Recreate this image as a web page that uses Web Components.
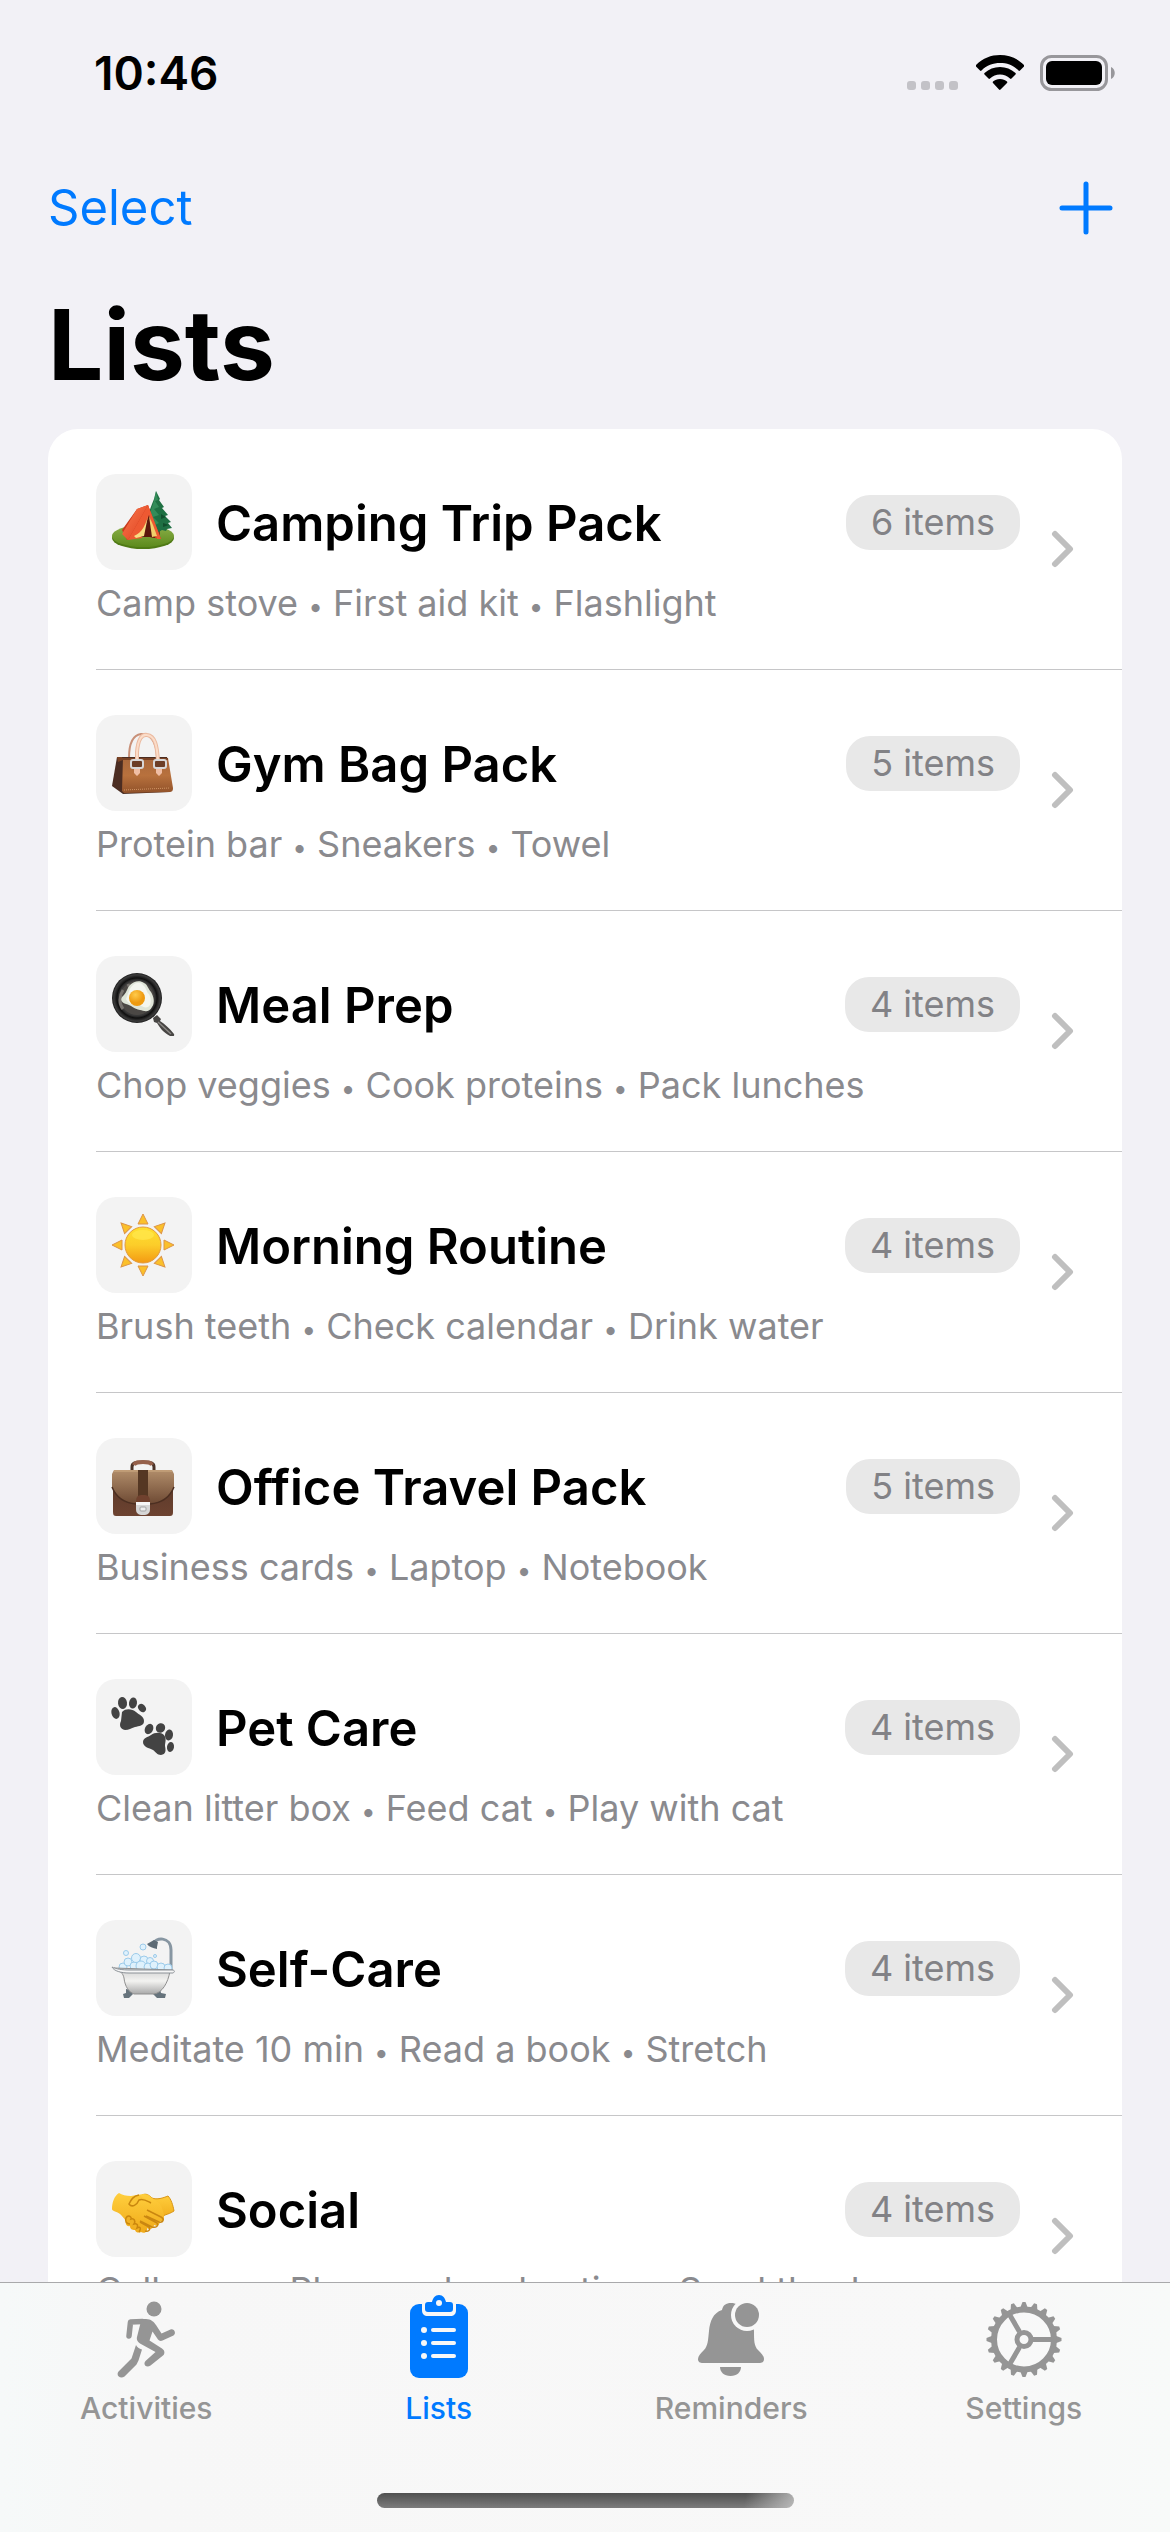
<!DOCTYPE html>
<html lang="en">
<head>
<meta charset="utf-8">
<meta name="viewport" content="width=device-width, initial-scale=1">
<title>Lists</title>
<style>
  html, body { margin: 0; height: 100%; }
  body { background: #f2f1f6; font-family: Inter, "Liberation Sans", sans-serif; color: #000; overflow: hidden; }
</style>
</head>
<body>
<lists-app></lists-app>
<script>
const define = (name, html, setup) => {
  const template = document.createElement('template');
  template.innerHTML = html;
  customElements.define(name, class extends HTMLElement {
    constructor() {
      super();
      this.attachShadow({ mode: 'open' }).append(template.content.cloneNode(true));
    }
    connectedCallback() { if (setup) setup(this, this.shadowRoot); }
  });
};

/* ---------- pictures ---------- */
const emoji = {
  camping: `
    <defs>
      <linearGradient id="g" x1="0" y1="0" x2="0" y2="1"><stop offset="0" stop-color="#8cb04a"/><stop offset="1" stop-color="#5c8a1c"/></linearGradient>
      <linearGradient id="t" x1="0" y1="0" x2="1" y2="1"><stop offset="0" stop-color="#fb7a4e"/><stop offset="1" stop-color="#dd3f1e"/></linearGradient>
    </defs>
    <ellipse cx="32" cy="48" rx="31" ry="11" fill="#4f7a15"/>
    <ellipse cx="32" cy="46" rx="31" ry="11" fill="url(#g)"/>
    <path d="M45 40h4v6h-4z" fill="#6b4428"/>
    <path d="M45 1l4 8-1 1 5 7-2 1 6 7-3 1 6 6-3 1 4 5-5 1-1 2-4-1-5 3-9-2-4-5 2-6 3-8 3-8 2-5z" fill="#1f7043"/>
    <path d="M45 1l2 9-3 1 4 6-5 2 5 6-6 2 6 6-6 3-5-6 3-10 3-9z" fill="#3c9962" opacity=".7"/>
    <path d="M50 24l5 3-5 2zM52 33l6 2-6 2z" fill="#124f2d"/>
    <path d="M26 19l11-4 13 34-17-3-17 4-5-10z" fill="#c93a1d"/>
    <path d="M26 19l11-4L17 50 11 44z" fill="url(#t)"/>
    <path d="M37 15l13 34h-4L38 27l-7 21-14 2z" fill="#ed5932"/>
    <path d="M38 25l-8 22h9l5 1z" fill="#5b170d"/>
    <path d="M37 26l-4 20-8 2-2-2c8-3 12-12 14-20z" fill="#f8dd82"/>
    <path d="M38 26l3 21 5-1-4-11z" fill="#f0cf6b"/>`,
  handbag: `
    <defs><linearGradient id="g" x1="0" y1="0" x2="0" y2="1"><stop offset="0" stop-color="#a9683c"/><stop offset=".5" stop-color="#b8713d"/><stop offset="1" stop-color="#91522a"/></linearGradient></defs>
    <path d="M18 27c0-15 4-23 12-24 8-1 16 7 16 24" fill="none" stroke="#c89078" stroke-width="2"/>
    <path d="M6 26l50 0 5 31-2 4-47 2L1 55z" fill="#4b2d22"/>
    <path d="M12 27h45l5 30c0 3-1 4-4 4l-45 1-2-2z" fill="url(#g)"/>
    <path d="M6 26l5 0 1 3-5 2zM11 27h46v2H11z" fill="#7b4325"/>
    <path d="M13 59l46-2" stroke="#d19564" stroke-width="1" stroke-dasharray="1 1"/>
    <path d="M26 31V21C27 8 31 3 36 4c8 1 10 10 11 26" fill="none" stroke="#eab99f" stroke-width="4"/>
    <path d="M26 31V21C27 8 31 3 36 4c8 1 10 10 11 26" fill="none" stroke="#fbdcc8" stroke-width="2"/>
    <path d="M23 38h6v4l-3 3-3-3zM45 38h6v4l-3 3-3-3z" fill="#f0bea4"/>
    <rect x="20" y="29" width="12" height="8" rx="2" fill="#6c3e26" stroke="#d8d8d8" stroke-width="2"/>
    <rect x="43" y="29" width="12" height="8" rx="2" fill="#6c3e26" stroke="#d8d8d8" stroke-width="2"/>`,
  cooking: `
    <defs>
      <radialGradient id="g"><stop offset="0" stop-color="#555250"/><stop offset=".72" stop-color="#363636"/><stop offset=".8" stop-color="#0f0f0f"/><stop offset=".93" stop-color="#3c3c3c"/><stop offset="1" stop-color="#171717"/></radialGradient>
      <radialGradient id="y" cx=".4" cy=".3"><stop offset="0" stop-color="#ffcb4b"/><stop offset="1" stop-color="#ee9a10"/></radialGradient>
    </defs>
    <path d="M42 46l4-3 4 4-1 2c5 3 9 7 14 13 1 2-2 4-4 2-7-4-10-8-13-13l-3-1z" fill="#474543"/>
    <path d="M47 50l13 12" stroke="#8b8885" stroke-width="1.500"/>
    <circle cx="26" cy="26" r="25" fill="url(#g)"/>
    <circle cx="26" cy="26" r="17" fill="#4b4845"/>
    <path d="M12 18c-4 6-4 14 0 19M17 12l10 22" stroke="#77736f" stroke-width="3" fill="none"/>
    <path d="M19 13c4-4 10-5 14-2 4 2 4 6 7 9 3 5 4 11 1 15-3 6-8 4-12 3-6-1-9-5-14-6-6-2-6-6-2-9 3-3 3-7 6-10z" fill="#dfe5d8"/>
    <path d="M21 14c4-4 8-4 11-1 4 3 3 7 6 9 3 5 2 12-1 13-5 2-7-3-12-2-5 0-9-3-10-6 2-4 3-10 6-13z" fill="#f4f6ef"/>
    <circle cx="26" cy="26" r="8" fill="url(#y)"/>`,
  sun: `
    <defs><linearGradient id="g" x1="0" y1="0" x2="0" y2="1"><stop offset="0" stop-color="#ffe02f"/><stop offset=".5" stop-color="#fccd2a"/><stop offset="1" stop-color="#f39a12"/></linearGradient></defs>
    <g fill="#fbc02a" stroke="#dc9447" stroke-width="1">${Array.from({ length: 8 }, (_, i) => `<path d="M32 1l5 10h-10z" transform="rotate(${i * 45} 32 32)"/>`).join('')}</g>
    <circle cx="32" cy="32" r="18" fill="url(#g)" stroke="#e39a3d" stroke-width="1"/>
    <ellipse cx="32" cy="22" rx="11" ry="5" fill="#ffe84e" opacity=".7"/>`,
  briefcase: `
    <defs>
      <linearGradient id="g" x1="0" y1="0" x2="0" y2="1"><stop offset="0" stop-color="#b18d6a"/><stop offset="1" stop-color="#6e4a34"/></linearGradient>
      <linearGradient id="b" x1="0" y1="0" x2="0" y2="1"><stop offset="0" stop-color="#5c3a2a"/><stop offset="1" stop-color="#6c4230"/></linearGradient>
    </defs>
    <path d="M21 17V13c0-4 3-5 11-5s11 1 11 5v4" fill="none" stroke="#4a3328" stroke-width="3"/>
    <path d="M23 11c1-3 4-3 9-3s8 0 9 3" fill="none" stroke="#95604a" stroke-width="4"/>
    <path d="M2 28h60v30c0 3-1 4-3 4H5c-2 0-3-1-3-4z" fill="url(#b)"/>
    <path d="M3 16h58l2 4v13c-4 10-12 16-24 17H25C13 49 5 43 1 33V20z" fill="url(#g)"/>
    <path d="M1 33c4 10 12 16 24 17h14c12-1 20-7 24-17" fill="none" stroke="#4c2f21" stroke-width="1.500"/>
    <path d="M3 17h58" stroke="#d0ad84" stroke-width="1"/>
    <path d="M27 16h10v29H27z" fill="#553723"/>
    <path d="M25 48c0-6 2-7 7-7s7 1 7 7z" fill="#70412e"/>
    <path d="M25 48h14v7c0 4-2 6-7 6s-7-2-7-6z" fill="#d6d6d6"/>
    <path d="M25 48h14v3H25z" fill="#f6f6f6"/>
    <rect x="29" y="53" width="6" height="4" rx="1" fill="#eee" stroke="#a2a2a2"/>`,
  paws: `
    <g fill="#434343">
      <path d="M11 17c4-4 10-3 14 0 3 3 8 4 8 9s-5 5-9 6-6 3-10 3c-5-1-6-5-4-9z"/>
      <ellipse cx="4.500" cy="18" rx="4" ry="6" transform="rotate(-14 4.500 18)"/>
      <ellipse cx="11.500" cy="8" rx="4.500" ry="6" transform="rotate(-8 11.500 8)"/>
      <ellipse cx="22" cy="8" rx="4" ry="5.500" transform="rotate(8 22 8)"/>
      <ellipse cx="31" cy="13" rx="3.500" ry="4.500" transform="rotate(-40 31 13)"/>
      <path d="M32 47c0-4 5-5 8-7 4-3 10-3 13 0 3 4 1 7 1 11 1 5 1 8-4 9-4 0-5-3-8-5-4-2-10-3-10-8z"/>
      <ellipse cx="38" cy="34" rx="4" ry="5.500" transform="rotate(28 38 34)"/>
      <ellipse cx="49.500" cy="33" rx="4.500" ry="5" transform="rotate(36 49.500 33)"/>
      <ellipse cx="58" cy="40" rx="4" ry="5.500" transform="rotate(10 58 40)"/>
      <ellipse cx="59.500" cy="52" rx="3.500" ry="5" transform="rotate(8 59.500 52)"/>
    </g>`,
  bath: `
    <defs><linearGradient id="g" x1="0" y1="0" x2="0" y2="1"><stop offset="0" stop-color="#cfcfcf"/><stop offset=".5" stop-color="#f3f3f1"/><stop offset="1" stop-color="#a9a9a9"/></linearGradient></defs>
    <path d="M60 33V14c0-14-16-13-18-6" fill="none" stroke="#8796a2" stroke-width="3"/>
    <path d="M36 8l7-4 4 2-1 5 0 2c-4-1-8-2-10-5z" fill="#5d6b75"/>
    <g fill="#dff1fc" stroke="#9ccbea" stroke-width="1">
      <circle cx="12" cy="31" r="4"/><circle cx="17" cy="26" r="4"/><circle cx="23" cy="30" r="4"/><circle cx="25" cy="22" r="4.500"/>
      <circle cx="33" cy="24" r="4"/><circle cx="30" cy="30" r="5"/><circle cx="39" cy="25" r="3.500"/><circle cx="37" cy="31" r="4"/>
      <circle cx="43" cy="29" r="4"/><circle cx="50" cy="31" r="4"/><circle cx="57" cy="32" r="4"/><circle cx="15" cy="17" r="2.500"/>
      <circle cx="32" cy="11" r="3"/><circle cx="44" cy="20" r="1.500"/>
    </g>
    <path d="M15 53l5 1 2 4-4 4h-5l-1-4 3-1zM49 53l-5 1-2 4 4 4h8l1-4-5-1z" fill="#66737c"/>
    <path d="M3 32c6 3 9 5 10 10 1 9 5 14 10 16h20c8-1 14-11 16-23l3-1z" fill="url(#g)" stroke="#8f8f8f" stroke-width="1"/>
    <path d="M1 31c4 2 10 3 18 3h42c3 0 3 2 1 3H18C10 37 3 35 1 31z" fill="#f6f6f6" stroke="#8c9298" stroke-width="1"/>`,
  handshake: `
    <defs><linearGradient id="g" x1="0" y1="0" x2="0" y2="1"><stop offset="0" stop-color="#ffcf3e"/><stop offset="1" stop-color="#f0aa19"/></linearGradient></defs>
    <g transform="translate(0 5)">
      <path d="M57 14c3 3 5 9 6 15-3 2-6 3-9 4l-9 5-20-18 6-7c4-2 7 0 10 3 5 2 11 0 16-2z" fill="url(#g)" stroke="#d99514" stroke-width="1"/>
      <path d="M8 11c3 2 7 3 12 3l12-2c7 0 9 5 16 9 3 3 5 10 5 14 0 3-2 5-4 4 0 4-3 6-6 4 0 4-5 5-7 3 1 4-3 6-6 4-2 1-5 1-6-2-3 0-5-1-5-4-3 1-5-2-4-5-2-3-4-5-6-7-4-3-8-3-8-5 0-6 2-13 7-16z" fill="url(#g)"/>
      <path d="M19 42c-4 0-5-3-4-6 2-4 6-1 5 1 3-1 5 2 3 5 4-1 4 2 3 4 4-2 4 1 2 4" fill="#f1b224" stroke="#cb870d" stroke-width="1.500"/>
      <path d="M36 28l14 7c4 2 2 6-2 5l-13-6M33 34l13 7c2 3-1 5-5 4l-12-6M29 40l9 5c2 3-1 5-4 4" fill="none" stroke="#ca8711" stroke-width="1.500"/>
      <path d="M28 13c-6 1-8 5-10 9 3 4 8 1 10-4 4-2 8 1 12 3" fill="#fbc534" stroke="#c9870f" stroke-width="1.500"/>
    </g>`
};

define('status-bar', `
  <style>
    :host { display: flex; justify-content: space-between; align-items: center; height: 146px; padding: 0 54px 0 94px; box-sizing: border-box; }
    time { font-size: 46px; font-weight: 600; line-height: 56px; }
    .icons { display: flex; align-items: center; gap: 16px; }
    svg { display: block; }
  </style>
  <time>10:46</time>
  <div class="icons">
    <svg width="53" height="36" viewBox="0 0 53 36"><g fill="#c3c2c7"><rect y="26" width="9" height="9" rx="3"/><rect x="14" y="26" width="9" height="9" rx="3"/><rect x="28" y="26" width="9" height="9" rx="3"/><rect x="42" y="26" width="9" height="9" rx="3"/></g></svg>
    <svg width="48" height="36" viewBox="0 0 48 36">
      <path d="M24 0c9 0 17 3 24 10 .5 .500 .5 1 0 1.500l-4 4c-.5 .500-1 .500-1.500 0C37 10 31 8 24 8S11 10 5.500 15.500c-.5 .500-1 .500-1.500 0l-4-4c-.5-.5-.5-1 0-1.500C7 3 15 0 24 0z"/>
      <path d="M24 12c6 0 11 2 15.500 6 .5 .500 .5 1 0 1.500l-4 4c-.5 .500-1 .500-1.500 0-3-2.500-6-4-10-4s-7 1.500-10 4c-.5 .500-1 .500-1.500 0l-4-4c-.5-.5-.5-1 0-1.500C13 14 18 12 24 12z"/>
      <path d="M24 24c3 0 5 1 7 2.500 .5 .500 .5 1 0 1.500l-6.500 6.500c-.5 .500-1 .500-1.500 0L17 28c-.5-.5-.5-1 0-1.500C19 25 21 24 24 24z"/>
    </svg>
    <svg width="76" height="36" viewBox="0 0 76 36"><rect x="1.500" y="1.500" width="65" height="33" rx="10" fill="none" stroke="#98979b" stroke-width="3"/><rect x="6" y="6" width="56" height="24" rx="6"/><path d="M71 12c5 2 5 10 0 12z" fill="#98979b"/></svg>
  </div>`);

define('nav-bar', `
  <style>
    :host { display: block; padding: 0 48px; }
    .actions { display: flex; justify-content: space-between; align-items: center; height: 124px; }
    button { all: unset; color: #007aff; font-size: 49px; line-height: 60px; cursor: pointer; }
    svg { display: block; margin-right: 9px; }
    h1 { margin: 0; padding: 9px 0 19px; font-size: 98px; line-height: 131px; font-weight: 700; }
  </style>
  <div class="actions">
    <button type="button">Select</button>
    <button type="button" aria-label="Add list"><svg width="54" height="54" viewBox="0 0 54 54"><path d="M27 3v48M3 27h48" stroke="#007aff" stroke-width="5" stroke-linecap="round"/></svg></button>
  </div>
  <h1><slot></slot></h1>`);

define('list-row', `
  <style>
    :host { display: block; padding-left: 48px; }
    a { display: flex; align-items: center; gap: 30px; padding: 45px 48px 45px 0; color: inherit; text-decoration: none; border-bottom: 1px solid #c6c6c8; }
    .body { flex: 1; min-width: 0; }
    .head { display: flex; align-items: center; gap: 24px; }
    .tile { display: flex; flex: none; box-sizing: border-box; width: 96px; height: 96px; padding-right: 3px; border-radius: 20px; background: #f3f3f3; align-items: center; justify-content: center; }
    h2 { flex: 1; margin: 0; padding-top: 3px; font-size: 49px; line-height: 60px; font-weight: 600; white-space: nowrap; }
    .count { padding: 0 25px; border-radius: 24px; background: #e8e8e8; color: #828286; font-size: 36px; line-height: 55px; white-space: nowrap; }
    p { margin: 12px 0 0; font-size: 36px; line-height: 42px; color: #8a8a8e; white-space: nowrap; }
    .dot { font-size: 26px; line-height: 1; }
    svg { display: block; flex: none; }
  </style>
  <a href="#">
    <div class="body">
      <div class="head">
        <span class="tile"></span>
        <h2></h2>
        <span class="count"></span>
      </div>
      <p></p>
    </div>
    <svg width="24" height="38" viewBox="0 0 24 38"><path d="M5 4l15 15L5 34" fill="none" stroke="#bfbfbf" stroke-width="6" stroke-linecap="round" stroke-linejoin="round"/></svg>
  </a>`, (host, root) => {
    root.querySelector('.tile').innerHTML = `<svg width="64" height="64" viewBox="0 0 64 64" aria-hidden="true">${emoji[host.getAttribute('icon')]}</svg>`;
    root.querySelector('h2').textContent = host.getAttribute('name');
    root.querySelector('.count').textContent = host.getAttribute('count') + ' items';
    root.querySelector('p').innerHTML = host.getAttribute('preview').split(', ').join(' <span class="dot">•</span> ');
});

define('list-card', `
  <style>:host { display: block; margin: 0 48px; background: #fff; border-radius: 30px; overflow: hidden; }</style>
  <slot></slot>`);

define('tab-item', `
  <style>
    :host { display: block; flex: 1 1 0; color: #959595; }
    :host([active]) { color: #007aff; }
    a { display: flex; flex-direction: column; align-items: center; color: inherit; text-decoration: none; font-size: 30px; line-height: 36px; font-weight: 500; }
    .icon { height: 107px; }
    ::slotted(svg) { display: block; }
  </style>
  <a href="#"><span class="icon"><slot name="icon"></slot></span><slot></slot></a>`);

define('tab-bar', `
  <style>
    :host { display: block; box-sizing: border-box; height: 250px; border-top: 1px solid #a9a9ab; background: linear-gradient(90deg, #f6f9f9, #f7f7f7 12%, #f8f8f8 85%, #f8faf9); }
    nav { display: flex; height: 210px; }
    .home { width: 417px; height: 15px; margin: 0 auto; border-radius: 8px; background: linear-gradient(100deg, transparent 88%, #c8c8c8cc), linear-gradient(#505050, #7c7c7c); }
  </style>
  <nav><slot></slot></nav>
  <div class="home"></div>`);

const gearTeeth = Array.from({ length: 20 }, (_, i) =>
  `<path d="M70 33.500l4 1.500 2.500 1v3l-2.500 1-4 1.500z" transform="rotate(${i * 18} 39 37.500)"/>`).join('');

define('lists-app', `
  <style>
    :host { display: flex; flex-direction: column; height: 100vh; }
    main { flex: 1; min-height: 0; overflow: hidden; }
  </style>
  <status-bar></status-bar>
  <nav-bar>Lists</nav-bar>
  <main>
    <list-card>
      <list-row icon="camping" name="Camping Trip Pack" count="6" preview="Camp stove, First aid kit, Flashlight"></list-row>
      <list-row icon="handbag" name="Gym Bag Pack" count="5" preview="Protein bar, Sneakers, Towel"></list-row>
      <list-row icon="cooking" name="Meal Prep" count="4" preview="Chop veggies, Cook proteins, Pack lunches"></list-row>
      <list-row icon="sun" name="Morning Routine" count="4" preview="Brush teeth, Check calendar, Drink water"></list-row>
      <list-row icon="briefcase" name="Office Travel Pack" count="5" preview="Business cards, Laptop, Notebook"></list-row>
      <list-row icon="paws" name="Pet Care" count="4" preview="Clean litter box, Feed cat, Play with cat"></list-row>
      <list-row icon="bath" name="Self-Care" count="4" preview="Meditate 10 min, Read a book, Stretch"></list-row>
      <list-row icon="handshake" name="Social" count="4" preview="Call mom, Plan weekend outing, Send thanks"></list-row>
    </list-card>
  </main>
  <tab-bar>
    <tab-item>
      <svg slot="icon" width="60" height="100" viewBox="0 0 60 100" fill="none" stroke="currentColor" stroke-linecap="round" stroke-linejoin="round">
        <circle cx="38" cy="26" r="7.500" fill="currentColor" stroke="none"/>
        <path d="M13 53l1.500-14 12-.5" stroke-width="5.500"/>
        <path d="M22 36h8c5 0 8 3 10 6l5.500 8.500 9-4c4-1 6 4 3 6l-11 5c-2 1-3.500 0-4.500-1l-5.500-8-3 9 12.500 8c3 2 3 5 1 7L34.500 82.500c-4 3-8-1-5-4.500l10-9L24 60.500c-3-2-3.500-4-3-6.500l3.500-14z" fill="currentColor" stroke="none"/>
        <path d="M20 62c1 2 3 3.500 6 4.500l-3.500 11-2 4-12 12c-4 3-9-1-6-5l13-13z" fill="currentColor" stroke="none"/>
      </svg>
      Activities
    </tab-item>
    <tab-item active>
      <svg slot="icon" width="60" height="100" viewBox="0 0 60 100">
        <rect x="1" y="21" width="58" height="74" rx="9" fill="currentColor"/>
        <path d="M13 19v8c0 4 2 6 6 6h22c4 0 6-2 6-6v-8z" fill="#f7f7f7"/>
        <path d="M16 22c0-2 1-3 3-3h4c1-4 3-7 7-7s6 3 7 7h4c2 0 3 1 3 3v4c0 2-1 3-3 3H19c-2 0-3-1-3-3z" fill="currentColor"/>
        <circle cx="30" cy="20" r="3" fill="#f7f7f7"/>
        <g fill="#f7f7f7"><circle cx="15" cy="47" r="3"/><circle cx="15" cy="60" r="3"/><circle cx="15" cy="73" r="3"/><rect x="22" y="45" width="25" height="4" rx="2"/><rect x="22" y="58" width="25" height="4" rx="2"/><rect x="22" y="71" width="25" height="4" rx="2"/></g>
      </svg>
      Lists
    </tab-item>
    <tab-item>
      <svg slot="icon" width="66" height="100" viewBox="0 0 66 100">
        <path d="M33 20c-5 0-8 2-9 7-9 3-12 11-13 21-1 9-1 15-5 19-3 3-6 6-6 9s2 4 5 4h56c3 0 5-1 5-4s-3-6-6-9c-4-4-4-10-4-19-1-10-4-18-13-21-1-5-5-7-10-7z" fill="currentColor"/>
        <circle cx="49" cy="32" r="16" fill="#f8f8f8"/><circle cx="49" cy="32" r="12" fill="currentColor"/>
        <path d="M22 84h21c0 5-4 9-10.500 9S22 89 22 84z" fill="currentColor"/>
      </svg>
      Reminders
    </tab-item>
    <tab-item>
      <svg slot="icon" width="78" height="100" viewBox="0 -19 78 100" fill="currentColor">
        ${gearTeeth}
        <g fill="none" stroke="currentColor"><circle cx="39" cy="37.500" r="30" stroke-width="6"/><circle cx="39" cy="37.500" r="7" stroke-width="5"/><path d="M48 37.500h20M34.500 29.700L24.500 12.400M34.500 45.300L24.500 62.600" stroke-width="5"/></g>
      </svg>
      Settings
    </tab-item>
  </tab-bar>`);
</script>
</body>
</html>
